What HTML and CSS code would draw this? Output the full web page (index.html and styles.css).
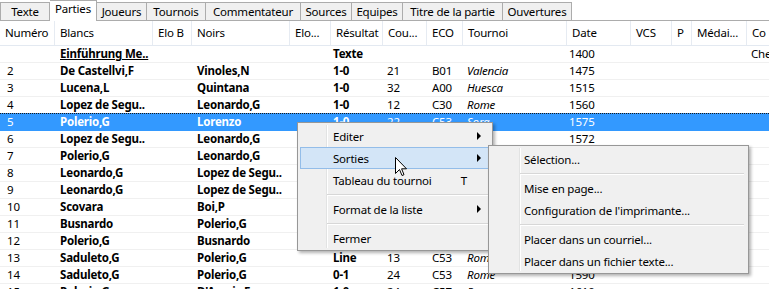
FILE: index.html
```html
<!DOCTYPE html>
<html lang="fr">
<head>
<meta charset="utf-8">
<title>Parties</title>
<link rel="stylesheet" href="styles.css">
</head>
<body>
<div class="app">
  <div class="tabs">
    <div class="tab w-texte">Texte</div>
    <div class="tab active w-parties">Parties</div>
    <div class="tab w-joueurs">Joueurs</div>
    <div class="tab w-tournois">Tournois</div>
    <div class="tab w-comment">Commentateur</div>
    <div class="tab w-sources">Sources</div>
    <div class="tab w-equipes">Equipes</div>
    <div class="tab w-titre">Titre de la partie</div>
    <div class="tab w-ouv">Ouvertures</div>
  </div>

  <div class="list">
    <div class="row head">
      <div class="c">Numéro</div><div class="c">Blancs</div><div class="c">Elo B</div><div class="c">Noirs</div><div class="c">Elo...</div><div class="c">Résultat</div><div class="c">Cou...</div><div class="c">ECO</div><div class="c">Tournoi</div><div class="c">Date</div><div class="c">VCS</div><div class="c">P</div><div class="c">Médai...</div><div class="c">Co</div>
    </div>

    <div class="row">
      <div class="c num"></div><div class="c b pl"><u>Einführung Me..</u></div><div class="c"></div><div class="c b pl"></div><div class="c"></div><div class="c b res">Texte</div><div class="c cou"></div><div class="c eco"></div><div class="c i tour"></div><div class="c date">1400</div><div class="c"></div><div class="c"></div><div class="c"></div><div class="c co">Che</div>
    </div>
    <div class="row">
      <div class="c num">2</div><div class="c b pl">De Castellvi,F</div><div class="c"></div><div class="c b pl">Vinoles,N</div><div class="c"></div><div class="c b res">1-0</div><div class="c cou">21</div><div class="c eco">B01</div><div class="c i tour">Valencia</div><div class="c date">1475</div><div class="c"></div><div class="c"></div><div class="c"></div><div class="c co"></div>
    </div>
    <div class="row">
      <div class="c num">3</div><div class="c b pl">Lucena,L</div><div class="c"></div><div class="c b pl">Quintana</div><div class="c"></div><div class="c b res">1-0</div><div class="c cou">32</div><div class="c eco">A00</div><div class="c i tour">Huesca</div><div class="c date">1515</div><div class="c"></div><div class="c"></div><div class="c"></div><div class="c co"></div>
    </div>
    <div class="row prefocus">
      <div class="c num">4</div><div class="c b pl">Lopez de Segu..</div><div class="c"></div><div class="c b pl">Leonardo,G</div><div class="c"></div><div class="c b res">1-0</div><div class="c cou">12</div><div class="c eco">C30</div><div class="c i tour">Rome</div><div class="c date">1560</div><div class="c"></div><div class="c"></div><div class="c"></div><div class="c co"></div>
    </div>
    <div class="row sel">
      <div class="c num">5</div><div class="c b pl">Polerio,G</div><div class="c"></div><div class="c b pl">Lorenzo</div><div class="c"></div><div class="c b res">1-0</div><div class="c cou">22</div><div class="c eco">C53</div><div class="c i tour">Sora</div><div class="c date">1575</div><div class="c"></div><div class="c"></div><div class="c"></div><div class="c co"></div>
    </div>
    <div class="row">
      <div class="c num">6</div><div class="c b pl">Lopez de Segu..</div><div class="c"></div><div class="c b pl">Leonardo,G</div><div class="c"></div><div class="c b res">0-1</div><div class="c cou">18</div><div class="c eco">C40</div><div class="c i tour">Pisa</div><div class="c date">1572</div><div class="c"></div><div class="c"></div><div class="c"></div><div class="c co"></div>
    </div>
    <div class="row">
      <div class="c num">7</div><div class="c b pl">Polerio,G</div><div class="c"></div><div class="c b pl">Leonardo,G</div><div class="c"></div><div class="c b res">0-1</div><div class="c cou">30</div><div class="c eco">C44</div><div class="c i tour">Rome</div><div class="c date">1575</div><div class="c"></div><div class="c"></div><div class="c"></div><div class="c co"></div>
    </div>
    <div class="row">
      <div class="c num">8</div><div class="c b pl">Leonardo,G</div><div class="c"></div><div class="c b pl">Lopez de Segu..</div><div class="c"></div><div class="c b res">1-0</div><div class="c cou">24</div><div class="c eco">C33</div><div class="c i tour">Madrid</div><div class="c date">1575</div><div class="c"></div><div class="c"></div><div class="c"></div><div class="c co"></div>
    </div>
    <div class="row">
      <div class="c num">9</div><div class="c b pl">Leonardo,G</div><div class="c"></div><div class="c b pl">Lopez de Segu..</div><div class="c"></div><div class="c b res">1-0</div><div class="c cou">35</div><div class="c eco">C33</div><div class="c i tour">Madrid</div><div class="c date">1575</div><div class="c"></div><div class="c"></div><div class="c"></div><div class="c co"></div>
    </div>
    <div class="row">
      <div class="c num">10</div><div class="c b pl">Scovara</div><div class="c"></div><div class="c b pl">Boi,P</div><div class="c"></div><div class="c b res">0-1</div><div class="c cou">27</div><div class="c eco">C54</div><div class="c i tour">Rome</div><div class="c date">1575</div><div class="c"></div><div class="c"></div><div class="c"></div><div class="c co"></div>
    </div>
    <div class="row">
      <div class="c num">11</div><div class="c b pl">Busnardo</div><div class="c"></div><div class="c b pl">Polerio,G</div><div class="c"></div><div class="c b res">0-1</div><div class="c cou">19</div><div class="c eco">C53</div><div class="c i tour">Rome</div><div class="c date">1590</div><div class="c"></div><div class="c"></div><div class="c"></div><div class="c co"></div>
    </div>
    <div class="row">
      <div class="c num">12</div><div class="c b pl">Polerio,G</div><div class="c"></div><div class="c b pl">Busnardo</div><div class="c"></div><div class="c b res">1-0</div><div class="c cou">16</div><div class="c eco">C53</div><div class="c i tour">Rome</div><div class="c date">1590</div><div class="c"></div><div class="c"></div><div class="c"></div><div class="c co"></div>
    </div>
    <div class="row">
      <div class="c num">13</div><div class="c b pl">Saduleto,G</div><div class="c"></div><div class="c b pl">Polerio,G</div><div class="c"></div><div class="c b res">Line</div><div class="c cou">13</div><div class="c eco">C53</div><div class="c i tour">Rome</div><div class="c date">1590</div><div class="c"></div><div class="c"></div><div class="c"></div><div class="c co"></div>
    </div>
    <div class="row">
      <div class="c num">14</div><div class="c b pl">Saduleto,G</div><div class="c"></div><div class="c b pl">Polerio,G</div><div class="c"></div><div class="c b res">0-1</div><div class="c cou">24</div><div class="c eco">C53</div><div class="c i tour">Rome</div><div class="c date">1590</div><div class="c"></div><div class="c"></div><div class="c"></div><div class="c co"></div>
    </div>
    <div class="row">
      <div class="c num">15</div><div class="c b pl">Polerio,G</div><div class="c"></div><div class="c b pl">D'Arcais,F</div><div class="c"></div><div class="c b res">1-0</div><div class="c cou">24</div><div class="c eco">C57</div><div class="c i tour">Rome</div><div class="c date">1610</div><div class="c"></div><div class="c"></div><div class="c"></div><div class="c co"></div>
    </div>
  </div>

  <div class="menu main-menu">
    <div class="mi"><span>Editer</span><span class="arr"></span></div>
    <div class="mi hot"><span>Sorties</span><span class="arr"></span></div>
    <div class="mi"><span>Tableau du tournoi</span><span class="key">T</span></div>
    <div class="sep"></div>
    <div class="mi"><span>Format de la liste</span><span class="arr"></span></div>
    <div class="sep"></div>
    <div class="mi"><span>Fermer</span></div>
  </div>

  <div class="menu sub-menu">
    <div class="mi"><span>Sélection...</span></div>
    <div class="sep"></div>
    <div class="mi"><span>Mise en page...</span></div>
    <div class="mi"><span>Configuration de l'imprimante...</span></div>
    <div class="sep"></div>
    <div class="mi"><span>Placer dans un courriel...</span></div>
    <div class="mi"><span>Placer dans un fichier texte...</span></div>
  </div>

  <svg class="cursor" width="13" height="20" viewBox="0 0 13 20">
    <path d="M0.5 0.5 L0.5 16.5 L4.5 12.5 L7 18.5 L9 17.7 L6.6 11.8 L11.5 11.8 Z" fill="#fff" stroke="#000" stroke-width="1" stroke-linejoin="miter"/>
  </svg>
</div>
</body>
</html>
```

FILE: styles.css
```css
html, body {
  margin: 0;
  padding: 0;
  background: #fff;
  overflow: hidden;
}

.app {
  position: relative;
  width: 769px;
  height: 289px;
  overflow: hidden;
  font-family: "Noto Sans", "Open Sans", sans-serif;
  font-size: 11.5px;
  letter-spacing: -0.2px;
  color: #000;
}

/* ---------- tabs ---------- */
.tabs {
  display: flex;
  align-items: flex-end;
  height: 20px;
  border-bottom: 1px solid #acacac;
  background: #fff;
}

.tab {
  box-sizing: border-box;
  height: 18px;
  flex: none;
  display: flex;
  align-items: center;
  justify-content: center;
  background: #f0f0f0;
  border-top: 1px solid #acacac;
  border-right: 1px solid #acacac;
  line-height: 16px;
  white-space: nowrap;
}

.tab:first-child { border-left: 1px solid #acacac; }

.tab.active {
  height: 21px;
  margin-bottom: -1px;
  background: #fff;
  align-items: flex-start;
  padding-top: 0;
  position: relative;
}

.w-texte { width: 50px; }
.w-parties { width: 47px; }
.w-joueurs { width: 50px; }
.w-tournois { width: 59px; }
.w-comment { width: 95px; }
.w-sources { width: 51px; }
.w-equipes { width: 51px; }
.w-titre { width: 100px; }
.w-ouv { width: 69px; }

/* ---------- list ---------- */
.list {
  display: flex;
  flex-direction: column;
}

.row {
  display: grid;
  grid-template-columns: 55px 98px 39px 98px 41px 52px 44px 36px 104px 64px 41px 20px 55px 60px;
  height: 16px;
  line-height: 16px;
  border-bottom: 1px solid #f0f0f0;
  flex: none;
}

.row .c {
  overflow: hidden;
  white-space: nowrap;
  padding-left: 4px;
}

.row.head {
  height: 24px;
  line-height: 24px;
  border-bottom: 1px solid #e3e9f1;
}

.row.head .c {
  padding-left: 5px;
  border-right: 1px solid #e6ebf2;
}

.row .num { padding-left: 7px; }
.row .pl { padding-left: 5px; }
.row .res { padding-left: 2px; }
.row .cou { padding-left: 4px; }
.row .eco { padding-left: 5px; }
.row .tour { padding-left: 4px; }
.row .date { padding-left: 2px; }
.row .co { padding-left: 4px; }

.b { font-weight: bold; }
.i { font-style: italic; }

.row.prefocus { border-bottom-color: transparent; }

.row.sel {
  margin-top: -1px;
  border-top: 1px dotted #1a1a1a;
  border-bottom-color: #3399ff;
  background: #3399ff;
  color: #fff;
}

/* ---------- context menus ---------- */
.menu {
  position: absolute;
  box-sizing: border-box;
  background: #f0f0f0;
  border: 1px solid #979797;
  padding: 2px 2px 1px 2px;
  box-shadow: 2px 2px 3px rgba(0, 0, 0, 0.3);
}

.menu::before {
  content: "";
  position: absolute;
  top: 2px;
  bottom: 2px;
  width: 1px;
  background: #e2e3e3;
  border-right: 1px solid #fff;
}

.main-menu {
  left: 297px;
  top: 122px;
  width: 196px;
}
.main-menu::before { left: 28px; }

.sub-menu {
  left: 488px;
  top: 145px;
  width: 261px;
}
.sub-menu::before { left: 30px; }

.mi {
  position: relative;
  box-sizing: border-box;
  height: 22px;
  display: flex;
  align-items: center;
  justify-content: space-between;
  padding-left: 32px;
  padding-right: 8px;
  border: 1px solid transparent;
  white-space: nowrap;
}

.mi.hot {
  background: #d3e5f7;
  border-color: #93bde9;
}

.arr {
  width: 0;
  height: 0;
  border-top: 4px solid transparent;
  border-bottom: 4px solid transparent;
  border-left: 4px solid #000;
}

.key {
  margin-right: 14px;
}

.sep {
  height: 7px;
  position: relative;
}
.sep::after {
  content: "";
  position: absolute;
  top: 3px;
  right: 2px;
  height: 1px;
  background: #d7d7d7;
  border-bottom: 1px solid #fff;
}
.main-menu .sep::after { left: 27px; }
.sub-menu .sep::after { left: 29px; }

.cursor {
  position: absolute;
  left: 395px;
  top: 157px;
}
```
